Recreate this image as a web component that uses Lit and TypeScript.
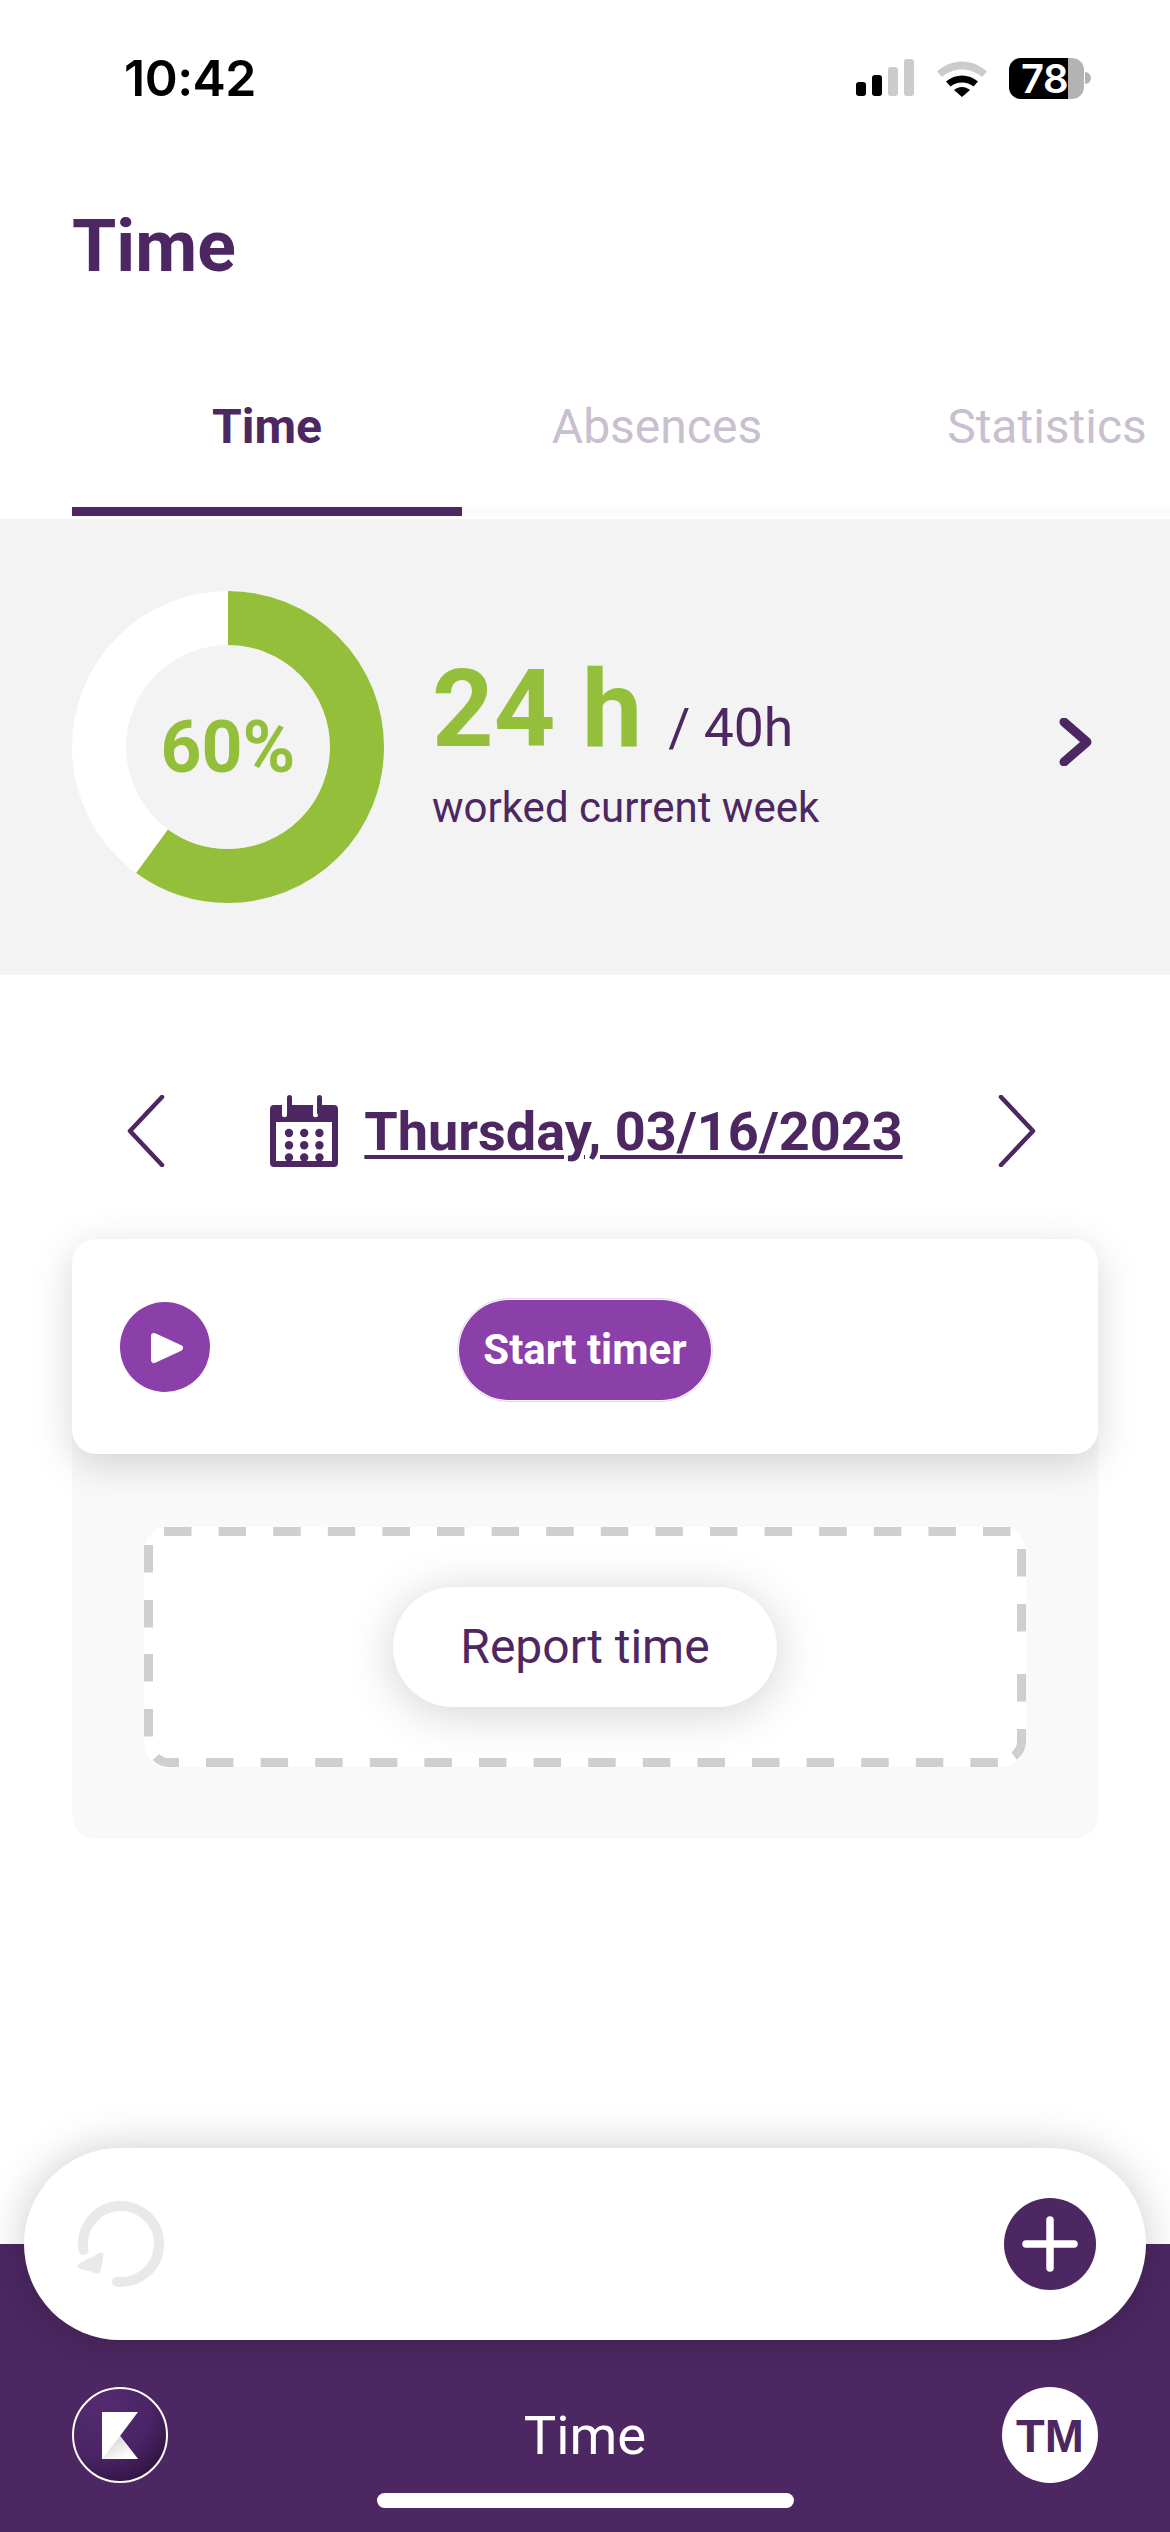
import { LitElement, html, css, svg } from 'lit';
import { customElement } from 'lit/decorators.js';

const tabs = ['Time', 'Absences', 'Statistics'];

// donut: 60% of the ring, starting at 12 o'clock
const ringRadius = 129;
const ringLength = 2 * Math.PI * ringRadius;

const calendarDots = [0, 1, 2].flatMap((row) =>
  [0, 1, 2].map((col) => svg`<circle cx=${19 + col * 15.2} cy=${38 + row * 12.2} r="4.2" fill="#4c2761"></circle>`)
);

// the dashes of the drop zone are not evenly spaced in the original, so they are listed side by side
const topDashes = Array.from({ length: 16 }, (_, k) => `M${20 + k * 54.6} 4.500h27.500`);
const bottomDashes = Array.from({ length: 15 }, (_, k) => `M${62 + k * 54.6} 235.500h27.500`);
const leftDashes = [18, 73, 127, 182].map((y) => `M4.500 ${y}v27.500`);
const rightDashes = [22, 77, 147].map((y) => `M877.500 ${y}v27.500`);
const cornerDashes = [
  'M877.500 202V214A18 18 0 0 1 870 229',
  'M35 235.500H26A18 18 0 0 1 12 230',
];
const dashes = [...topDashes, ...bottomDashes, ...leftDashes, ...rightDashes, ...cornerDashes];

@customElement('app-root')
export class AppRoot extends LitElement {
  static styles = css`
    :host {
      display: flex;
      flex-direction: column;
      width: 1170px;
      min-height: 2532px;
      background: #fff;
      font-family: Roboto, sans-serif;
      color: #4c2761;
    }
    * { box-sizing: border-box; }
    svg { display: block; flex: none; }

    .status {
      height: 156px;
      display: flex;
      align-items: center;
      padding: 0 79px 0 124px;
    }
    .clock {
      font-family: Inter, sans-serif;
      font-size: 50px;
      font-weight: 600;
      color: #000;
      letter-spacing: -0.5px;
    }
    .status-icons {
      margin-left: auto;
      display: flex;
      align-items: center;
    }
    .signal { margin-right: 22px; }
    .wifi { margin-right: 21px; }
    .battery {
      width: 75px;
      height: 41px;
      border-radius: 12px;
      background: #b3b3b3;
    }
    .battery-fill {
      width: 59px;
      height: 100%;
      border-radius: 12px 0 0 12px;
      background: #000;
      color: #fff;
      font-family: Inter, sans-serif;
      font-weight: 600;
      font-size: 40px;
      line-height: 41px;
      text-align: right;
      letter-spacing: -0.5px;
      white-space: nowrap;
    }
    .battery-nub {
      width: 6px;
      height: 12px;
      margin-left: 1px;
      background: #b3b3b3;
      border-radius: 0 6px 6px 0;
    }

    .title {
      height: 174px;
      padding: 6px 0 0 72px;
      display: flex;
      align-items: center;
      font-size: 71.5px;
      font-weight: 700;
    }

    .tabs {
      margin-left: 72px;
      height: 186px;
      display: flex;
      overflow: hidden;
      background: linear-gradient(#fff 177px, #fbfbfb 177px);
    }
    .tab {
      flex: none;
      width: 390px;
      display: flex;
      align-items: center;
      justify-content: center;
      padding-top: 16px;
      border-bottom: 9px solid transparent;
      font-size: 48px;
      color: #c9bfd0;
      white-space: nowrap;
    }
    .tab.active {
      color: #4c2761;
      font-weight: 700;
      border-bottom-color: #4c2761;
    }

    .summary {
      margin-top: 3px;
      height: 456px;
      background: #f3f3f3;
      display: flex;
      align-items: center;
      padding: 0 77px 0 72px;
    }
    .donut-label {
      font-family: Roboto, sans-serif;
      font-size: 71.5px;
      font-weight: 700;
      fill: #93bf3a;
    }
    .hours { margin-left: 48px; }
    .hours-line {
      display: flex;
      align-items: baseline;
      line-height: 110px;
    }
    .hours-big {
      font-size: 107.5px;
      font-weight: 700;
      color: #93bf3a;
    }
    .hours-goal {
      margin-left: 26px;
      font-size: 53.5px;
    }
    .hours-note {
      font-size: 42px;
      line-height: 50px;
      margin-bottom: 8px;
    }
    .more {
      margin-left: auto;
      margin-bottom: 10px;
    }

    .date-row {
      margin-top: 120px;
      padding: 0 134px 0 127px;
      display: flex;
      align-items: center;
      justify-content: space-between;
    }
    .date {
      display: flex;
      align-items: center;
      gap: 26px;
      padding-left: 10px;
    }
    .date-text {
      font-size: 54px;
      font-weight: 700;
      text-decoration: underline;
      text-decoration-thickness: 4px;
      text-underline-offset: 5px;
      white-space: nowrap;
    }

    .panel {
      margin: 72px 72px 0;
      background: #f9f9f9;
      border-radius: 24px;
      padding-bottom: 72px;
    }
    .timer {
      height: 215px;
      background: #fff;
      border-radius: 24px;
      box-shadow: 0 10px 40px rgba(0, 0, 0, 0.16);
      display: grid;
      grid-template-columns: 1fr auto 1fr;
      align-items: center;
      padding-left: 48px;
      padding-right: 48px;
    }
    .play { justify-self: start; }
    .start {
      width: 256px;
      height: 104px;
      margin-top: 6px;
      border-radius: 52px;
      background: #8b3fa9;
      background-clip: padding-box;
      border: 2px solid transparent;
      outline: 1px solid #e4d4ea;
      outline-offset: -1px;
      display: flex;
      align-items: center;
      justify-content: center;
      color: #fff;
      font-size: 42px;
      font-weight: 700;
      white-space: nowrap;
    }
    .drop {
      position: relative;
      margin: 73px 72px 0;
      height: 240px;
      background: #fff;
      border-radius: 24px;
      display: flex;
      align-items: center;
      justify-content: center;
    }
    .drop-border {
      position: absolute;
      inset: 0;
    }
    .report {
      position: relative;
      width: 384px;
      height: 120px;
      border-radius: 60px;
      background: #fff;
      box-shadow: 0 6px 48px rgba(0, 0, 0, 0.18);
      display: flex;
      align-items: center;
      justify-content: center;
      font-size: 48px;
      padding-bottom: 2px;
    }

    .spacer { flex: 1; }

    .footer {
      position: relative;
      height: 288px;
      background: #4c2761;
    }
    .pill {
      position: relative;
      margin: -96px 24px 0;
      height: 192px;
      border-radius: 96px;
      background: #fff;
      box-shadow: 0 0 44px rgba(0, 0, 0, 0.2);
      display: flex;
      align-items: center;
      justify-content: space-between;
      padding: 0 50px;
    }
    .nav {
      display: flex;
      align-items: flex-start;
      justify-content: space-between;
      padding: 47px 72px 0;
      color: #fff;
    }
    .nav-title {
      font-size: 54.5px;
      line-height: 96px;
    }
    .avatar {
      width: 96px;
      height: 96px;
      border-radius: 50%;
      background: #fff;
      color: #4c2761;
      display: flex;
      align-items: center;
      justify-content: center;
      font-family: 'Liberation Sans', sans-serif;
      font-size: 47px;
      font-weight: 700;
    }
    .home-bar {
      position: absolute;
      left: 377px;
      bottom: 24px;
      width: 417px;
      height: 15px;
      border-radius: 8px;
      background: #fff;
    }
  `;

  render() {
    return html`
      <div class="status">
        <span class="clock">10:42</span>
        <div class="status-icons">
          <svg class="signal" width="58" height="38" viewBox="0 0 58 38">
            <rect x="0" y="23" width="10" height="14" rx="3" fill="#000"></rect>
            <rect x="16" y="16" width="10" height="21" rx="3" fill="#000"></rect>
            <rect x="32" y="8" width="10" height="29" rx="3" fill="#ccc"></rect>
            <rect x="48" y="0" width="10" height="37" rx="3" fill="#ccc"></rect>
          </svg>
          <svg class="wifi" width="52" height="38" viewBox="0 0 52 38">
            <path d="M1 12.5C15 -1 37 -1 51 12.5L46 18C35 8 17 8 6 18Z" fill="#ccc"></path>
            <path d="M10 22.5C19 14.5 33 14.5 42 22.5L37.5 27.5C31 22 21 22 14.5 27.5Z" fill="#000"></path>
            <path d="M18 31C23 27 29 27 34 31L26 38Z" fill="#000"></path>
          </svg>
          <div class="battery"><div class="battery-fill">78</div></div>
          <div class="battery-nub"></div>
        </div>
      </div>

      <div class="title">Time</div>

      <div class="tabs">
        ${tabs.map((t, i) => html`<div class="tab ${i === 0 ? 'active' : ''}">${t}</div>`)}
      </div>

      <div class="summary">
        <svg width="312" height="312" viewBox="0 0 312 312">
          <circle cx="156" cy="156" r=${ringRadius} fill="none" stroke="#fff" stroke-width="54"></circle>
          <circle cx="156" cy="156" r=${ringRadius} fill="none" stroke="#93bf3a" stroke-width="54"
            stroke-dasharray="${ringLength * 0.6} ${ringLength}" transform="rotate(-90 156 156)"></circle>
          <text class="donut-label" x="156" y="181" text-anchor="middle">60%</text>
        </svg>
        <div class="hours">
          <div class="hours-line">
            <span class="hours-big">24 h</span>
            <span class="hours-goal">/ 40h</span>
          </div>
          <div class="hours-note">worked current week</div>
        </div>
        <svg class="more" width="34" height="48" viewBox="0 0 34 48">
          <path d="M5 4L28 24L5 44" fill="none" stroke="#4c2761" stroke-width="9" stroke-linecap="round" stroke-linejoin="round"></path>
        </svg>
      </div>

      <div class="date-row">
        <svg width="38" height="72" viewBox="0 0 38 72">
          <path d="M35 2L3 36L35 70" fill="none" stroke="#4c2761" stroke-width="4.5" stroke-linecap="round" stroke-linejoin="round"></path>
        </svg>
        <div class="date">
          <svg width="68" height="72" viewBox="0 0 68 72">
            <path fill-rule="evenodd" fill="#4c2761"
              d="M4 10H12V20C12 23 17 23 17 20V10H43V20C43 23 48 23 48 20V10H64C66.500 10 68 11.500 68 14V68C68 70.500 66.500 72 64 72H4C1.500 72 0 70.500 0 68V14C0 11.500 1.500 10 4 10ZM6 27V66H62V27Z"></path>
            <rect x="17" y="0" width="5" height="20" rx="2.500" fill="#4c2761"></rect>
            <rect x="47" y="0" width="5" height="20" rx="2.500" fill="#4c2761"></rect>
            ${calendarDots}
          </svg>
          <span class="date-text">Thursday, 03/16/2023</span>
        </div>
        <svg width="38" height="72" viewBox="0 0 38 72">
          <path d="M3 2L35 36L3 70" fill="none" stroke="#4c2761" stroke-width="4.500" stroke-linecap="round" stroke-linejoin="round"></path>
        </svg>
      </div>

      <div class="panel">
        <div class="timer">
          <svg class="play" width="90" height="90" viewBox="0 0 90 90">
            <circle cx="45" cy="45" r="45" fill="#8b3fa9"></circle>
            <path d="M34 34L60 46L34 58Z" fill="#fff" stroke="#fff" stroke-width="6" stroke-linejoin="round"></path>
          </svg>
          <div class="start">Start timer</div>
        </div>
        <div class="drop">
          <svg class="drop-border" width="882" height="240" viewBox="0 0 882 240">
            ${dashes.map((d) => svg`<path d=${d} fill="none" stroke="#cfcfcf" stroke-width="9"></path>`)}
          </svg>
          <div class="report">Report time</div>
        </div>
      </div>

      <div class="spacer"></div>

      <div class="footer">
        <div class="pill">
          <svg width="96" height="96" viewBox="0 0 96 96">
            <path d="M43 85.700A38 38 0 1 0 9.500 54"
              fill="none" stroke="#e9e9e9" stroke-width="10" stroke-linecap="round"></path>
            <path d="M6 70L24 75L27 59Z" fill="#e9e9e9" stroke="#e9e9e9" stroke-width="5" stroke-linejoin="round"></path>
          </svg>
          <svg width="92" height="92" viewBox="0 0 92 92">
            <circle cx="46" cy="46" r="46" fill="#4c2761"></circle>
            <path d="M46 22V70M22 46H70" stroke="#fff" stroke-width="7.500" stroke-linecap="round"></path>
          </svg>
        </div>
        <div class="nav">
          <svg width="96" height="96" viewBox="0 0 96 96">
            <defs>
              <radialGradient id="kbg" cx="0.3" cy="0.2" r="0.9">
                <stop offset="0" stop-color="#542b70"></stop>
                <stop offset="0.6" stop-color="#4a2466"></stop>
                <stop offset="1" stop-color="#2f1240"></stop>
              </radialGradient>
              <linearGradient id="kfold" x1="0.25" y1="0.35" x2="0.7" y2="0.9">
                <stop offset="0" stop-color="#dedede"></stop>
                <stop offset="1" stop-color="#fff"></stop>
              </linearGradient>
            </defs>
            <circle cx="48" cy="48" r="47" fill="url(#kbg)" stroke="#fff" stroke-width="2"></circle>
            <path d="M30 25H66L48 49L66 72H30Z" fill="#fff"></path>
            <path d="M30 72L48 49L66 72Z" fill="url(#kfold)"></path>
          </svg>
          <span class="nav-title">Time</span>
          <div class="avatar">TM</div>
        </div>
        <div class="home-bar"></div>
      </div>
    `;
  }
}
